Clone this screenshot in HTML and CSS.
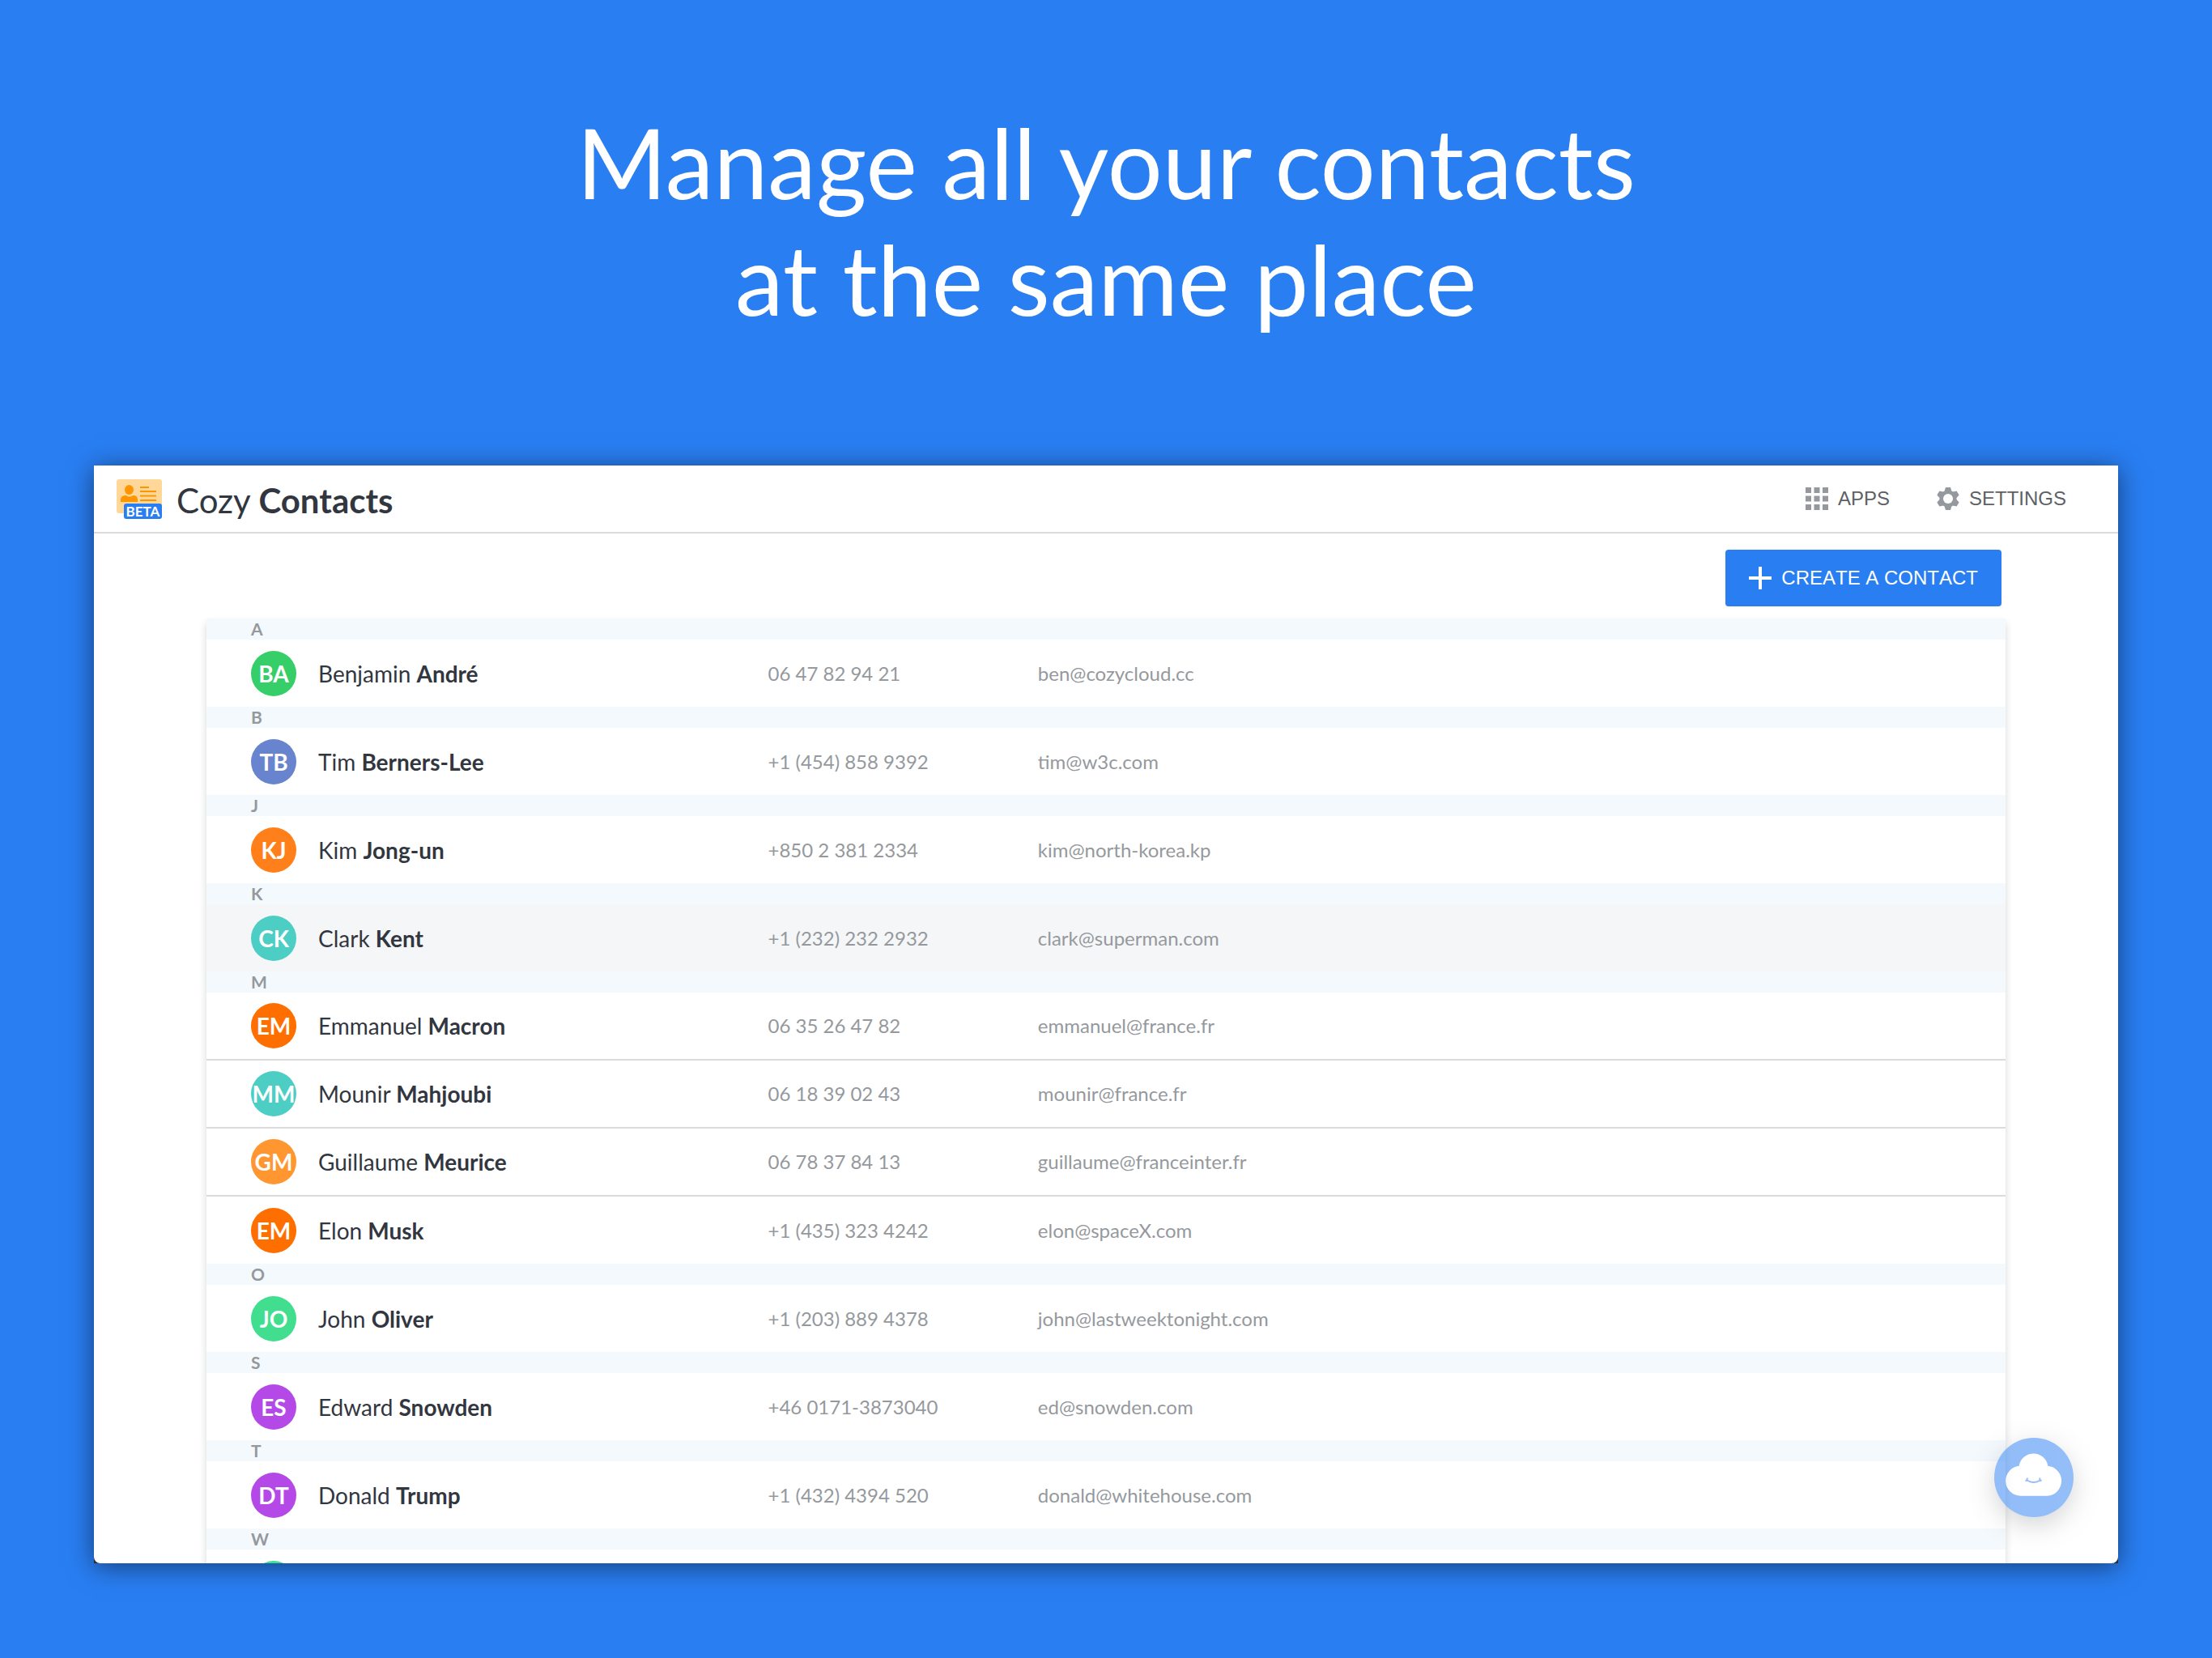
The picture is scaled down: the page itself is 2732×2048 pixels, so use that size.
FILE: index.html
```html
<!DOCTYPE html>
<html lang="en">
<head>
<meta charset="utf-8">
<meta name="viewport" content="width=device-width, initial-scale=1">
<title>Cozy Contacts</title>
<link rel="stylesheet" href="styles.css">
</head>
<body>
<h1 class="headline">Manage all your contacts<br>at the same place</h1>
<div class="window">
  <div class="app">
    <header class="topbar">
      <svg class="logo" viewBox="0 0 56 49" aria-hidden="true">
        <rect width="56" height="42" rx="3" fill="#ffd799"/>
        <ellipse cx="15.500" cy="13" rx="5.500" ry="6" fill="#ff9500"/>
        <path d="M5 28v-3q0-4 5-5h2q4 3 8 0h2q4 1 4 5v3z" fill="#ff9500"/>
        <path d="M29 10h11M29 15h20M29 20.500h20M29 26h20" stroke="#ff9500" stroke-width="2"/>
        <rect x="9" y="30" width="47" height="19" rx="3" fill="#297ef2"/>
        <text class="logo-tag" x="32.500" y="46" text-anchor="middle">BETA</text>
      </svg>
      <div class="brand">Cozy <b>Contacts</b></div>
      <nav class="nav">
        <a class="nav-link" href="#apps">
          <svg class="icon" viewBox="0 0 28 28" aria-hidden="true"><path d="M0 0h7v7H0zM10.500 0h7v7h-7zM21 0h7v7h-7zM0 10.500h7v7H0zM10.500 10.500h7v7h-7zM21 10.500h7v7h-7zM0 21h7v7H0zM10.500 21h7v7h-7zM21 21h7v7h-7z" fill="#95999d"/></svg>
          APPS
        </a>
        <a class="nav-link" href="#settings">
          <svg class="icon" viewBox="0 0 28 28" aria-hidden="true">
            <g fill="#95999d">
              <circle cx="14" cy="14" r="10.500"/>
              <path id="tooth" d="M11 0h6l1.500 5v18L17 28h-6l-1.500-5V5z"/>
              <use href="#tooth" transform="rotate(60 14 14)"/>
              <use href="#tooth" transform="rotate(120 14 14)"/>
            </g>
            <circle cx="14" cy="14" r="6" fill="#fff"/>
          </svg>
          SETTINGS
        </a>
      </nav>
    </header>
    <main class="content">
      <div class="toolbar">
        <button class="create" type="button">
          <svg class="icon" viewBox="0 0 28 28" aria-hidden="true"><path d="M14 0v28M0 14h28" stroke="#fff" stroke-width="4"/></svg>
          CREATE A CONTACT
        </button>
      </div>
      <table class="contacts">
        <colgroup><col class="col-avatar"><col class="col-name"><col class="col-phone"><col></colgroup>
        <tbody>
          <tr class="section"><th colspan="4">A</th></tr>
          <tr><td><span class="avatar green">BA</span></td><td class="name">Benjamin <b>André</b></td><td>06 47 82 94 21</td><td>ben@cozycloud.cc</td></tr>
        </tbody>
        <tbody>
          <tr class="section"><th colspan="4">B</th></tr>
          <tr><td><span class="avatar indigo">TB</span></td><td class="name">Tim <b>Berners-Lee</b></td><td>+1 (454) 858 9392</td><td>tim@w3c.com</td></tr>
        </tbody>
        <tbody>
          <tr class="section"><th colspan="4">J</th></tr>
          <tr><td><span class="avatar pumpkin">KJ</span></td><td class="name">Kim <b>Jong-un</b></td><td>+850 2 381 2334</td><td>kim@north-korea.kp</td></tr>
        </tbody>
        <tbody>
          <tr class="section"><th colspan="4">K</th></tr>
          <tr class="active"><td><span class="avatar teal">CK</span></td><td class="name">Clark <b>Kent</b></td><td>+1 (232) 232 2932</td><td>clark@superman.com</td></tr>
        </tbody>
        <tbody>
          <tr class="section"><th colspan="4">M</th></tr>
          <tr><td><span class="avatar orange">EM</span></td><td class="name">Emmanuel <b>Macron</b></td><td>06 35 26 47 82</td><td>emmanuel@france.fr</td></tr>
          <tr><td><span class="avatar teal">MM</span></td><td class="name">Mounir <b>Mahjoubi</b></td><td>06 18 39 02 43</td><td>mounir@france.fr</td></tr>
          <tr><td><span class="avatar amber">GM</span></td><td class="name">Guillaume <b>Meurice</b></td><td>06 78 37 84 13</td><td>guillaume@franceinter.fr</td></tr>
          <tr><td><span class="avatar orange">EM</span></td><td class="name">Elon <b>Musk</b></td><td>+1 (435) 323 4242</td><td>elon@spaceX.com</td></tr>
        </tbody>
        <tbody>
          <tr class="section"><th colspan="4">O</th></tr>
          <tr><td><span class="avatar mint">JO</span></td><td class="name">John <b>Oliver</b></td><td>+1 (203) 889 4378</td><td>john@lastweektonight.com</td></tr>
        </tbody>
        <tbody>
          <tr class="section"><th colspan="4">S</th></tr>
          <tr><td><span class="avatar purple">ES</span></td><td class="name">Edward <b>Snowden</b></td><td>+46 0171-3873040</td><td>ed@snowden.com</td></tr>
        </tbody>
        <tbody>
          <tr class="section"><th colspan="4">T</th></tr>
          <tr><td><span class="avatar purple">DT</span></td><td class="name">Donald <b>Trump</b></td><td>+1 (432) 4394 520</td><td>donald@whitehouse.com</td></tr>
        </tbody>
        <tbody>
          <tr class="section"><th colspan="4">W</th></tr>
          <tr><td><span class="avatar mint"></span></td><td class="name"></td><td></td><td></td></tr>
        </tbody>
      </table>
    </main>
    <button class="assistant" type="button" aria-label="Assistant">
      <svg viewBox="0 0 98 98" aria-hidden="true">
        <path d="M32.500 71.700a18.500 18.500 0 0 1-1.800-36.900a18 18 0 0 1 35.600 0a18.500 18.500 0 0 1-.8 36.900z" fill="#fff"/>
        <path d="M40.500 52.500q8.200 5 16.400 0M38.500 53q2.500 0 2.300-3.500M58.500 53q-2.500 0-2.300-3.500" fill="none" stroke="#297ef2" stroke-width="2"/>
      </svg>
    </button>
  </div>
</div>
</body>
</html>
```
FILE: styles.css
```css
* {
  box-sizing: border-box;
}

body {
  margin: 0;
  height: 100vh;
  padding: 128px 116px 117px;
  display: flex;
  flex-direction: column;
  gap: 159px;
  background: #297ef2;
  font-family: Lato, "Liberation Sans", sans-serif;
  color: #32363f;
}

.headline {
  margin: 0;
  font-size: 120px;
  line-height: 144px;
  font-weight: 400;
  text-align: center;
  color: #fff;
}

.window {
  flex: 1;
  min-height: 0;
  background: #2b2d31;
  box-shadow: 0 4px 30px rgba(0, 0, 0, 0.5);
}

.app {
  position: relative;
  height: 100%;
  overflow: hidden;
  border-radius: 0 0 8px 8px;
  background: #fff;
}

.topbar {
  display: flex;
  align-items: center;
  height: 84px;
  padding: 0 64px 0 28px;
  border-bottom: 2px solid #d9dbdd;
}

.logo {
  width: 56px;
  height: 49px;
}

.logo-tag {
  font-size: 17px;
  font-weight: 700;
  fill: #fff;
}

.brand {
  flex: 1;
  margin-left: 18px;
  padding-top: 4px;
  font-size: 42px;
  line-height: 50px;
}

.nav {
  display: flex;
  gap: 58px;
}

.nav-link {
  display: flex;
  align-items: center;
  gap: 12px;
  font-family: "Liberation Sans", Arial, sans-serif;
  font-size: 24px;
  line-height: 28px;
  color: #5d6165;
  text-decoration: none;
}

.icon {
  width: 28px;
  height: 28px;
}

.content {
  padding: 20px 139px 0;
}

.toolbar {
  display: flex;
  justify-content: flex-end;
  padding: 0 5px 15px;
}

.create {
  display: flex;
  align-items: center;
  gap: 12px;
  height: 70px;
  padding: 0 29px;
  border: 0;
  border-radius: 4px;
  background: #297ef2;
  color: #fff;
  font-family: "Liberation Sans", Arial, sans-serif;
  font-size: 24px;
  line-height: 28px;
  font-kerning: none;
}

.contacts {
  width: 100%;
  table-layout: fixed;
  border-spacing: 0;
  box-shadow: 0 6px 9px rgba(50, 54, 63, 0.2);
}

.col-avatar {
  width: 138px;
}

.col-name {
  width: 25%;
}

.col-phone {
  width: 15%;
}

.section th {
  height: 26px;
  padding: 0 0 0 55px;
  background: #f4f9fe;
  font-size: 21px;
  line-height: 26px;
  text-align: left;
  color: #95999d;
}

.contacts td {
  height: 83px;
  padding: 0;
  background: #fff;
  font-size: 24px;
  line-height: 30px;
  color: #95999d;
}

.contacts tr:not(.section):not(:last-child) td {
  height: 84px;
  border-bottom: 2px solid #d9dbdd;
}

.contacts .active td {
  background: #f5f6f7;
}

.contacts td.name {
  font-size: 28px;
  color: #32363f;
}

.avatar {
  display: flex;
  align-items: center;
  justify-content: center;
  width: 56px;
  height: 56px;
  margin-left: 55px;
  border-radius: 50%;
  font-size: 28px;
  font-weight: 700;
  color: #fff;
}

.green { background: #35ce68; }
.indigo { background: #6984ce; }
.pumpkin { background: #ff7f1b; }
.teal { background: #4dcec5; }
.orange { background: #ff6f00; }
.amber { background: #ff962f; }
.mint { background: #40de8e; }
.purple { background: #b449e7; }

.assistant {
  position: absolute;
  right: 55px;
  bottom: 57px;
  width: 98px;
  height: 98px;
  padding: 0;
  border: 0;
  border-radius: 50%;
  background: #297ef2;
  box-shadow: 0 10px 30px rgba(50, 54, 63, 0.4);
  opacity: 0.5;
}
```
